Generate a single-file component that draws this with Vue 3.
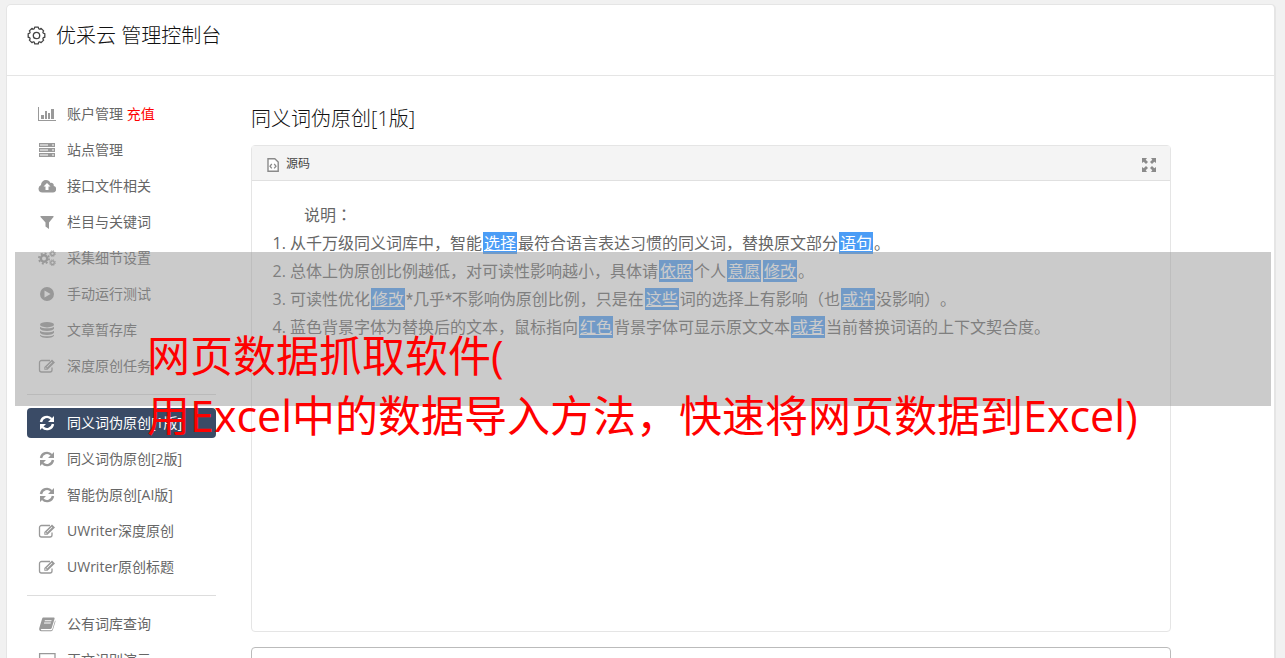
<script setup>
import { h } from 'vue'

// Full-width colons and brackets are set in a family that centres them in their cell.
const Txt = (props) =>
  props.value
    .split(/([：（）])/)
    .filter(Boolean)
    .map((s) => (/^[：（）]$/.test(s) ? h('span', { class: 'punct' }, s) : s))
Txt.props = ['value']

// Gear outline: eight broad teeth with rounded notches between them.
const at = (deg, r) => {
  const a = (deg * Math.PI) / 180
  return `${(9.5 + r * Math.cos(a)).toFixed(2)} ${(9.5 + r * Math.sin(a)).toFixed(2)}`
}
const gearPath =
  [0, 45, 90, 135, 180, 225, 270, 315]
    .map((a, i) => `${i ? 'L' : 'M'}${at(a - 12, 8.5)}L${at(a + 12, 8.5)}Q${at(a + 22.5, 5.6)} ${at(a + 33, 8.5)}`)
    .join('') + 'Z'

const groups = [
  [
    { icon: 'chart', text: '账户管理', extra: '充值' },
    { icon: 'server', text: '站点管理' },
    { icon: 'cloud', text: '接口文件相关' },
    { icon: 'filter', text: '栏目与关键词' },
    { icon: 'cogs', text: '采集细节设置' },
    { icon: 'play', text: '手动运行测试' },
    { icon: 'database', text: '文章暂存库' },
    { icon: 'edit', text: '深度原创任务' },
  ],
  [
    { icon: 'refresh', text: '同义词伪原创[1版]', active: true },
    { icon: 'refresh', text: '同义词伪原创[2版]' },
    { icon: 'refresh', text: '智能伪原创[AI版]' },
    { icon: 'edit', text: 'UWriter深度原创' },
    { icon: 'edit', text: 'UWriter原创标题' },
  ],
  [
    { icon: 'book', text: '公有词库查询' },
    { icon: 'desktop', text: '正文识别演示' },
  ],
]

const lines = [
  ['从千万级同义词库中，智能', { hl: '选择' }, '最符合语言表达习惯的同义词，替换原文部分', { hl: '语句' }, '。'],
  ['总体上伪原创比例越低，对可读性影响越小，具体请', { hl: '依照' }, '个人', { hl: '意愿' }, { hl: '修改' }, '。'],
  ['可读性优化', { hl: '修改' }, { star: '*' }, '几乎', { star: '*' }, '不影响伪原创比例，只是在', { hl: '这些' }, '词的选择上有影响（也', { hl: '或许' }, '没影响）。'],
  ['蓝色背景字体为替换后的文本，鼠标指向', { hl: '红色' }, '背景字体可显示原文文本', { hl: '或者' }, '当前替换词语的上下文契合度。'],
]
</script>

<template>
  <div class="page">
    <div class="panel">
      <header class="top">
        <svg class="gear" viewBox="0 0 19 19" aria-hidden="true">
          <path :d="gearPath" />
          <circle cx="9.5" cy="9.5" r="3.2" />
        </svg>
        <h1>优采云 管理控制台</h1>
      </header>

      <div class="body">
        <nav class="side">
          <ul v-for="(group, g) in groups" :key="g">
            <li v-for="item in group" :key="item.text">
              <a href="#" :class="{ active: item.active }">
                <svg class="icon" viewBox="0 0 18 16" aria-hidden="true">
                  <g v-if="item.icon === 'chart'">
                    <path d="M0 1h1v13h17v1H0z" />
                    <path d="M3 9h3v4H3zM7 5h2v8H7zM10 7h2v6h-2zM13 3h3v10h-3z" />
                  </g>
                  <g v-else-if="item.icon === 'server'">
                    <path fill-rule="evenodd" d="M1 1h16v4H1zM2 2.500v1h8v-1zM14 2.500v1h2v-1zM1 6h16v4H1zM2 7.500v1h8v-1zM14 7.500v1h2v-1zM1 11h16v4H1zM2 12.500v1h8v-1zM14 12.500v1h2v-1z" />
                  </g>
                  <path v-else-if="item.icon === 'cloud'" fill-rule="evenodd" d="M4.500 14.500A4 4 0 0 1 .5 10.500 4 4 0 0 1 3 6.900 5 5 0 0 1 8 2a5 5 0 0 1 4.500 3A2.500 2.500 0 0 1 15.700 8a3.300 3.300 0 0 1-1 6.500zM9 5 5.500 8.500h2V12h3V8.500h2z" />
                  <path v-else-if="item.icon === 'filter'" d="M2.500 2h13v1L11 8.500V15l-3.500-2.500v-4l-5-5.500z" />
                  <g v-else-if="item.icon === 'cogs'" fill="none" stroke="currentColor">
                    <circle cx="6" cy="8.500" r="3.200" stroke-width="2.400" />
                    <circle cx="6" cy="8.500" r="5.100" stroke-width="1.700" stroke-dasharray="2 2.005" />
                    <circle cx="14.500" cy="3.700" r="1.800" stroke-width="1.300" />
                    <circle cx="14.500" cy="3.700" r="2.900" stroke-width="1" stroke-dasharray="1.140 1.137" />
                    <circle cx="14.500" cy="12.700" r="1.800" stroke-width="1.300" />
                    <circle cx="14.500" cy="12.700" r="2.900" stroke-width="1" stroke-dasharray="1.140 1.137" />
                  </g>
                  <path v-else-if="item.icon === 'play'" fill-rule="evenodd" d="M9 1a7 7 0 1 1 0 14A7 7 0 0 1 9 1zM6.500 4.500v7L12.500 8z" />
                  <g v-else-if="item.icon === 'database'">
                    <ellipse cx="9" cy="2.700" rx="7" ry="2.700" />
                    <path d="M2 4.700c2 2 12 2 14 0v2c-2 3-12 3-14 0zM2 8.700c2 2 12 2 14 0v2c-2 3-12 3-14 0zM2 12.700c2 2 12 2 14 0v1c-2 3-12 3-14 0z" />
                  </g>
                  <g v-else-if="item.icon === 'edit'">
                    <path d="M12 2.500H3.500a2 2 0 0 0-2 2v7.500a2 2 0 0 0 2 2H12a2 2 0 0 0 2-2V9.500" fill="none" stroke="currentColor" stroke-width="1.300" />
                    <path fill-rule="evenodd" d="M14 1.500 17 4.500 9.500 11.800H6.300V8.900zM13.800 3.800 8.500 9l.5.5 5.300-5.200zM7.300 9.300v1.500h1.500z" />
                  </g>
                  <g v-else-if="item.icon === 'refresh'">
                    <path d="M3 7A6 6 0 0 1 13.500 4M15 9A6 6 0 0 1 4.500 12" fill="none" stroke="currentColor" stroke-width="2.400" />
                    <path d="M16 1v6h-6zM2 15V9h6z" />
                  </g>
                  <g v-else-if="item.icon === 'book'">
                    <path fill-rule="evenodd" d="M5.500 1.500h10c1 0 1.300.6 1 1.500l-2.800 9c-.2.700-.7 1-1.400 1H3.500c-.8 0-1 1 0 1.200h9.700c.6 0 1-.3 1.200-.9l2.700-8.800c.5.4.4.9.3 1.300l-2.500 8c-.3.900-.9 1.400-1.800 1.400H3.300C1.500 15.200.8 13.500 1.300 12l2.800-9.200c.2-.8.700-1.300 1.400-1.300zM6.900 4.300l-.3 1h6.700l.3-1zM6.200 6.600l-.3 1h6.700l.3-1z" />
                  </g>
                  <g v-else>
                    <path d="M1.600 1.600h15.400v10.500H1.600z" fill="none" stroke="currentColor" stroke-width="1.300" />
                    <path d="M7 12h4v2h2v1H5v-1h2z" />
                  </g>
                </svg>
                <span class="label">{{ item.text }}<em v-if="item.extra">&nbsp;{{ item.extra }}</em></span>
              </a>
            </li>
          </ul>
        </nav>

        <main class="content">
          <h2>同义词伪原创[1版]</h2>
          <section class="editor">
            <div class="toolbar">
              <button type="button" class="source">
                <svg viewBox="0 0 12 14" width="12" height="14" aria-hidden="true">
                  <path d="M1 .8h6.800L11.200 4v9.200H1z" fill="#fff" stroke="#8a8a8a" stroke-width="1.400" />
                  <path d="M4.800 6 3 8.200l1.800 2.200M7.200 6 9 8.200l-1.800 2.200" fill="none" stroke="#8a8a8a" stroke-width="1.300" />
                </svg>
                <span>源码</span>
              </button>
              <button type="button" class="expand" aria-label="最大化">
                <svg viewBox="0 0 14 14" width="14" height="14" aria-hidden="true">
                  <path d="M0 0h5L3.700 1.700 6 4 4 6 1.700 3.700 0 5zM14 0H9l1.300 1.700L8 4l2 2 2.300-2.300L14 5zM0 14h5l-1.300-1.700L6 10 4 8l-2.300 2.300L0 9zM14 14H9l1.300-1.700L8 10l2-2 2.300 2.300L14 9z" />
                </svg>
              </button>
            </div>
            <div class="text">
              <p><Txt value="说明：" /></p>
              <ol>
                <li v-for="(line, i) in lines" :key="i">
                  <template v-for="(part, j) in line" :key="j"><a v-if="part.hl" href="#">{{ part.hl }}</a><i v-else-if="part.star">{{ part.star }}</i><Txt v-else :value="part" /></template>
                </li>
              </ol>
            </div>
          </section>
          <textarea aria-label="原文"></textarea>
        </main>
      </div>
    </div>

    <div class="band"></div>
    <p class="caption">网页数据抓取软件(<br />用Excel中的数据导入方法，快速将网页数据到Excel)</p>
  </div>
</template>

<style>
body {
  background: #f1f1f1;
}
.punct {
  font-family: "Noto Sans CJK TC", sans-serif;
  line-height: 1;
}
</style>

<style scoped>
.page {
  position: relative;
  box-sizing: border-box;
  height: 100vh;
  overflow: hidden;
  padding: 4px 9px 0 6px;
  font-family: "Open Sans", "Noto Sans CJK SC", sans-serif;
  font-weight: 400;
  text-spacing-trim: space-all;
  color: #666;
}
.panel {
  box-sizing: border-box;
  min-height: 100%;
  background: #fff;
  border: 1px solid #e5e5e5;
  border-right-width: 2px;
  border-radius: 5px 5px 0 0;
}
.top {
  display: flex;
  align-items: center;
  gap: 10px;
  height: 62px;
  padding: 0 20px 8px;
  border-bottom: 1px solid #e5e5e5;
}
.gear {
  width: 19px;
  height: 19px;
  margin-bottom: 2px;
  fill: none;
  stroke: #444;
  stroke-width: 1.3;
  stroke-linejoin: round;
}
h1,
h2 {
  margin: 0;
  font-size: 20px;
  line-height: 28px;
  font-weight: 300;
  color: #111;
}
.body {
  display: flex;
  padding: 23px 103px 0 20px;
}
.side {
  flex: none;
  width: 189px;
  margin-right: 35px;
  font-size: 14px;
}
ul {
  display: flex;
  flex-direction: column;
  gap: 6px;
  margin: 0;
  padding: 0;
  list-style: none;
}
ul + ul {
  margin-top: 13px;
  padding-top: 13px;
  border-top: 1px solid #ddd;
}
.side a {
  display: flex;
  align-items: center;
  gap: 11px;
  height: 30px;
  padding-left: 11px;
  border-radius: 4px;
  color: #666;
  text-decoration: none;
  white-space: nowrap;
}
.side a.active {
  background: #3a4b66;
  color: #fff;
}
.label {
  padding-bottom: 2px;
}
.icon {
  width: 18px;
  height: 16px;
  color: #999;
  fill: currentColor;
}
.active .icon {
  color: #fff;
}
em {
  font-style: normal;
  color: #f00;
}
.content {
  flex: 1;
  min-width: 0;
  padding-top: 6px;
}
.editor {
  box-sizing: border-box;
  min-height: 487px;
  margin-top: 12px;
  border: 1px solid #e5e5e5;
  border-radius: 4px;
}
.toolbar {
  display: flex;
  align-items: center;
  justify-content: space-between;
  height: 34px;
  padding: 0 14px 0 15px;
  background: #f4f4f4;
  border-bottom: 1px solid #e0e0e0;
}
button {
  display: flex;
  align-items: center;
  padding: 0;
  border: 0;
  background: none;
  font: inherit;
  color: inherit;
}
.source {
  gap: 7px;
  font-size: 12px;
  color: #444;
}
.toolbar svg {
  margin-top: 4px;
}
.expand svg {
  fill: #8a8a8a;
}
.text {
  padding: 20px;
  font-size: 16px;
  line-height: 28px;
}
.text p {
  margin: 0;
  text-indent: 32px;
}
ol {
  margin: 0;
  padding-left: 18px;
}
.text a {
  margin: 0 1px;
  padding: 0 1px;
  background: #4b9df6;
  color: #fff;
  text-decoration-skip-ink: none;
}
.text i {
  font-family: Roboto, sans-serif;
  font-style: normal;
  line-height: 1;
}
textarea {
  display: block;
  box-sizing: border-box;
  width: 100%;
  height: 90px;
  margin-top: 15px;
  border: 1px solid #bbb;
  border-radius: 4px;
  resize: none;
}
.band {
  position: absolute;
  top: 252px;
  left: 15px;
  right: 14px;
  height: 154px;
  background: rgba(151, 151, 151, 0.5);
}
.caption {
  position: absolute;
  top: 326px;
  left: 147px;
  margin: 0;
  font-size: 43px;
  line-height: 60px;
  color: #f00;
  white-space: nowrap;
}
</style>
